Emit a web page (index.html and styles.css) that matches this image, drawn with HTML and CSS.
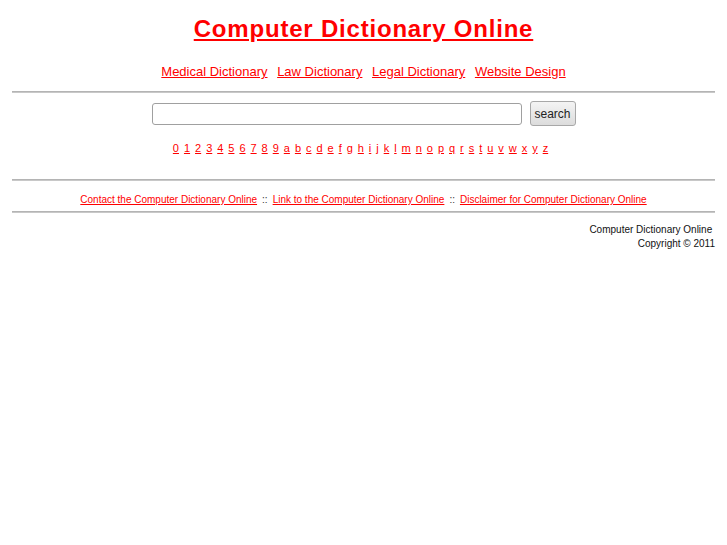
FILE: index.html
```html
<!DOCTYPE html>
<html>
<head>
<meta charset="utf-8">
<title>Computer Dictionary Online</title>
<link rel="stylesheet" href="styles.css">
</head>
<body>
<div class="page">
  <h1 class="title"><a href="#">Computer Dictionary Online</a></h1>
  <div class="nav">
    <a href="#">Medical Dictionary</a>
    <a href="#">Law Dictionary</a>
    <a href="#">Legal Dictionary</a>
    <a href="#">Website Design</a>
  </div>
  <hr class="rule">
  <form class="search">
    <input class="search-input" type="text">
    <button class="search-btn" type="button">search</button>
  </form>
  <div class="letters">
    <a href="#">0</a> <a href="#">1</a> <a href="#">2</a> <a href="#">3</a> <a href="#">4</a> <a href="#">5</a> <a href="#">6</a> <a href="#">7</a> <a href="#">8</a> <a href="#">9</a> <a href="#">a</a> <a href="#">b</a> <a href="#">c</a> <a href="#">d</a> <a href="#">e</a> <a href="#">f</a> <a href="#">g</a> <a href="#">h</a> <a href="#">i</a> <a href="#">j</a> <a href="#">k</a> <a href="#">l</a> <a href="#">m</a> <a href="#">n</a> <a href="#">o</a> <a href="#">p</a> <a href="#">q</a> <a href="#">r</a> <a href="#">s</a> <a href="#">t</a> <a href="#">u</a> <a href="#">v</a> <a href="#">w</a> <a href="#">x</a> <a href="#">y</a> <a href="#">z</a>
  </div>
  <hr class="rule rule-low">
  <div class="footer-links">
    <a href="#">Contact the Computer Dictionary Online</a><span class="sep">::</span><a href="#">Link to the Computer Dictionary Online</a><span class="sep">::</span><a href="#">Disclaimer for Computer Dictionary Online</a>
  </div>
  <hr class="rule rule-foot">
  <div class="copyright">
    <div>Computer Dictionary Online&nbsp;</div>
    <div>Copyright &copy; 2011</div>
  </div>
</div>
</body>
</html>
```

FILE: styles.css
```css
html, body {
  margin: 0;
  padding: 0;
  background: #ffffff;
}
body {
  font-family: "Liberation Sans", Arial, Helvetica, sans-serif;
  color: #222222;
}
.page {
  padding: 0 12px;
}
a {
  color: #ff0000;
}
.title {
  margin: 0;
  padding-top: 15px;
  text-align: center;
  font-size: 24px;
  line-height: 28px;
  font-weight: bold;
  letter-spacing: 0.8px;
}
.nav {
  margin-top: 21px;
  text-align: center;
  font-size: 13px;
  line-height: 16px;
  word-spacing: 6px;
}
.nav a {
  word-spacing: 0;
}
.rule {
  margin: 11px 0 0 0;
  border: 0;
  border-top: 1px solid #b4b4b4;
  border-bottom: 1px solid #c8c8c8;
  height: 0;
}
.search {
  display: flex;
  justify-content: center;
  align-items: center;
  gap: 8px;
  margin: 8px 0 0 0;
}
.search-input {
  width: 370px;
  height: 22px;
  box-sizing: border-box;
  border: 1px solid #a0a0a0;
  border-radius: 3px;
  padding: 0 4px;
  background: #fff;
  margin: 0;
}
.search-btn {
  height: 25px;
  width: 46px;
  box-sizing: border-box;
  border: 1px solid #a8a8a8;
  border-radius: 3px;
  background: linear-gradient(#f4f4f4, #dcdcdc);
  font-family: "Liberation Sans", Arial, sans-serif;
  font-size: 12px;
  color: #222;
  padding: 0;
  margin: 0;
}
.letters {
  margin-top: 15px;
  padding-right: 6px;
  text-align: center;
  font-size: 11px;
  line-height: 14px;
  word-spacing: 1.9px;
}
.rule-low {
  margin-top: 24px;
}
.footer-links {
  margin-top: 12px;
  text-align: center;
  font-size: 10px;
  line-height: 13px;
  color: #333;
}
.sep {
  margin: 0 5px;
}
.rule-foot {
  margin-top: 5px;
}
.copyright {
  margin-top: 10px;
  text-align: right;
  font-size: 10px;
  line-height: 14px;
  color: #111;
}
```
